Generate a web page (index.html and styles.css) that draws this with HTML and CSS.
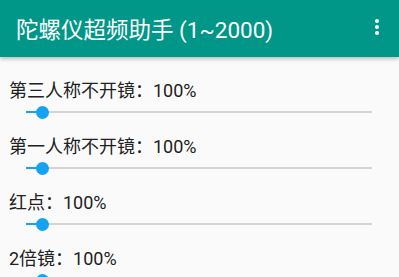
FILE: index.html
```html
<!DOCTYPE html>
<html lang="zh">
<head>
  <meta charset="UTF-8" />
  <meta name="viewport" content="width=device-width, initial-scale=1.0" />
  <title>陀螺仪超频助手</title>
  <link rel="stylesheet" href="styles.css">
</head>
<body>
  <div class="toolbar">
    <span class="title">陀螺仪超频助手 (1~2000)</span>
    <div class="menu">
      <span class="dot"></span>
      <span class="dot"></span>
      <span class="dot"></span>
    </div>
  </div>

  <div class="list">
    <div class="row">
      <div class="label">第三人称不开镜：100%</div>
      <div class="slider">
        <div class="fill"></div>
        <div class="thumb"></div>
        <div class="rest"></div>
      </div>
    </div>
    <div class="row">
      <div class="label">第一人称不开镜：100%</div>
      <div class="slider">
        <div class="fill"></div>
        <div class="thumb"></div>
        <div class="rest"></div>
      </div>
    </div>
    <div class="row">
      <div class="label">红点：100%</div>
      <div class="slider">
        <div class="fill"></div>
        <div class="thumb"></div>
        <div class="rest"></div>
      </div>
    </div>
    <div class="row">
      <div class="label">2倍镜：100%</div>
      <div class="slider">
        <div class="fill"></div>
        <div class="thumb"></div>
        <div class="rest"></div>
      </div>
    </div>
  </div>
</body>
</html>
```

FILE: styles.css
```css
html, body {
  margin: 0;
  height: 100%;
  overflow: hidden;
}

body {
  font-family: Roboto, "Noto Sans CJK SC", sans-serif;
  background-color: #fafafa;
  color: #212121;
}

.toolbar {
  height: 57px;
  background-color: #009688;
  color: #ffffff;
  display: flex;
  align-items: center;
  padding-left: 16px;
  padding-right: 16px;
  box-shadow: 0 2px 4px rgba(0, 0, 0, 0.25);
  position: relative;
}

.title {
  flex: 1;
  font-size: 22.5px;
  padding-bottom: 2px;
}

.menu {
  display: flex;
  flex-direction: column;
  gap: 2px;
  margin-right: 4px;
  margin-top: -3px;
}

.dot {
  width: 4px;
  height: 4px;
  border-radius: 50%;
  background: #ffffff;
}

.list {
  padding-top: 22px;
  padding-left: 9px;
}

.row {
  margin-bottom: 14px;
}

.label {
  font-size: 18px;
  line-height: 24px;
}

.slider {
  height: 18px;
  display: flex;
  align-items: center;
  margin-left: 17px;
  width: 346px;
}

.fill {
  width: 16px;
  height: 2px;
  background: #16a2f2;
}

.thumb {
  width: 13px;
  height: 13px;
  border-radius: 50%;
  background: #16a2f2;
  margin-left: -6px;
  margin-right: -7px;
  position: relative;
}

.rest {
  flex: 1;
  height: 2px;
  background: #d4d4d4;
}
```
